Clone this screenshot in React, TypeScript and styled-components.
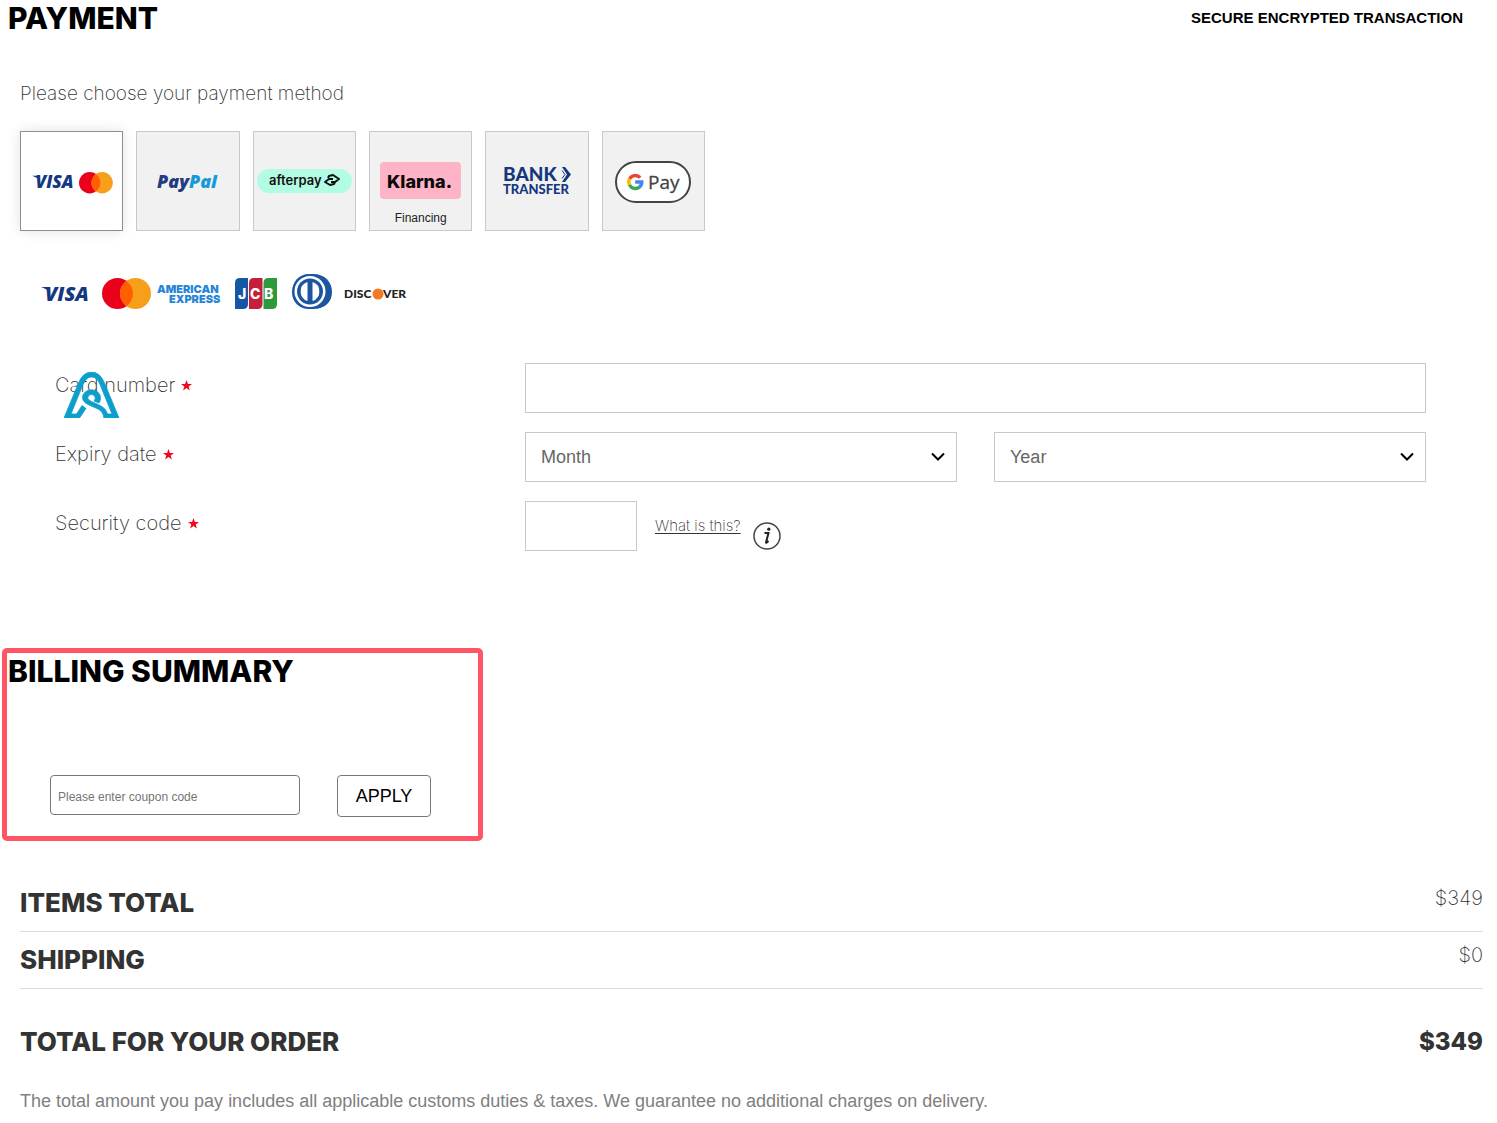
import React, { useState } from "react";
import styled, { createGlobalStyle } from "styled-components";

const display = `Inter, "Open Sans", sans-serif`;
const body = `"Liberation Sans", Arial, sans-serif`;

const GlobalStyle = createGlobalStyle`
  *, *::before, *::after { box-sizing: border-box; }
  body { margin: 0; background: #fff; color: #333; font-family: ${body}; }
`;

const Page = styled.main`
  padding-bottom: 10px;
`;

const Header = styled.header`
  display: flex;
  justify-content: space-between;
  align-items: center;
  padding: 0 34px 0 8px;
`;

const SectionTitle = styled.h2`
  margin: 0;
  font: 800 30px/36px ${display};
  color: #000;
`;

const SecureNote = styled.strong`
  font: 700 15px/36px ${body};
  color: #000;
`;

const Methods = styled.section`
  padding: 46px 20px 0;
`;

const Prompt = styled.p`
  margin: 0 0 25px;
  font: 200 19px/24px ${display};
  color: #333;
`;

const TileGrid = styled.div`
  display: grid;
  grid-template-columns: repeat(6, 1fr);
  gap: 13px;
  max-width: 685px;
`;

const Tile = styled.button<{ $selected: boolean }>`
  display: flex;
  flex-direction: column;
  align-items: center;
  justify-content: flex-end;
  height: 100px;
  padding: 0;
  overflow: hidden;
  cursor: pointer;
  font: 400 12px/16px ${body};
  color: #222;
  background: ${(p) => (p.$selected ? "#fff" : "#f1f1f1")};
  border: 1px solid ${(p) => (p.$selected ? "#8f8f8f" : "#c9c9c9")};
  box-shadow: ${(p) => (p.$selected ? "0 0 12px rgba(0, 0, 0, 0.12)" : "none")};
`;

const TileArt = styled.svg`
  display: block;
  flex: none;
`;

const TileCaption = styled.span`
  height: 20px;
`;

const CardBrands = styled.div`
  display: flex;
  gap: 5px;
  padding: 43px 21px 0;
`;

const CardForm = styled.form`
  display: grid;
  grid-template-columns: 470px 1fr;
  row-gap: 19px;
  padding: 53px 71px 0 55px;
`;

const LabelCell = styled.div`
  position: relative;
  padding-top: 10px;
`;

const FieldLabel = styled.label`
  display: flex;
  align-items: center;
  gap: 6px;
  font: 200 20px/24px ${display};
  color: #333;
`;

const Watermark = styled.svg`
  position: absolute;
  left: 9px;
  top: 9px;
`;

const FieldRow = styled.div`
  display: flex;
  gap: 37px;
`;

const TextBox = styled.input<{ $short?: boolean }>`
  flex: ${(p) => (p.$short ? "0 0 112px" : "1")};
  width: 112px;
  height: 50px;
  padding: 0 15px;
  font: 400 18px/24px ${body};
  color: #333;
  background: #fff;
  border: 1px solid #c9c9c9;
  border-radius: 0;
`;

const SelectWrap = styled.div`
  position: relative;
  flex: 1;
`;

const Select = styled.select`
  appearance: none;
  display: block;
  width: 100%;
  height: 50px;
  padding: 0 40px 0 15px;
  font: 400 18px/24px ${body};
  color: #666;
  background: #fff;
  border: 1px solid #c9c9c9;
  border-radius: 0;
`;

const Chevron = styled.svg`
  position: absolute;
  right: 12px;
  top: 20px;
  pointer-events: none;
`;

const HelpGroup = styled.div`
  display: flex;
  align-items: flex-start;
  gap: 12px;
  padding-top: 16px;
  margin-left: -19px;
`;

const HelpLink = styled.a`
  font: 200 15px/18px ${display};
  color: #333;
  text-decoration: underline;
  text-underline-offset: 2px;
`;

const InfoIcon = styled.svg`
  margin-top: 5px;
`;

const Billing = styled.section`
  width: 481px;
  max-width: 100%;
  margin: 97px 0 0 2px;
  padding: 0 0 19px 1px;
  border: 5px solid #ff5565;
  border-radius: 5px;
`;

const CouponForm = styled.form`
  display: flex;
  align-items: flex-start;
  gap: 37px;
  padding: 86px 0 0 42px;
`;

const CouponInput = styled.input`
  width: 250px;
  height: 40px;
  padding: 3px 7px 0;
  font: 400 12px/16px ${body};
  color: #333;
  background: #fff;
  border: 1px solid #777;
  border-radius: 4px;
  &::placeholder { color: #757575; }
`;

const ApplyButton = styled.button`
  width: 94px;
  height: 42px;
  padding: 0;
  font: 400 18px/24px ${body};
  color: #000;
  background: #fff;
  border: 1px solid #777;
  border-radius: 4px;
  cursor: pointer;
`;

const Totals = styled.dl`
  margin: 34px 0 0;
  padding: 0 14px 0 20px;
`;

const TotalRow = styled.div`
  display: flex;
  justify-content: space-between;
  padding: 9px 0 14px;
  border-bottom: 1px solid #dcdcdc;
`;

const TotalName = styled.dt`
  padding-top: 5px;
  font: 800 26px/28px ${display};
`;

const Amount = styled.dd`
  margin: 0;
  font: 200 20px/28px ${display};
  color: #333;
`;

const GrandRow = styled.div`
  display: flex;
  justify-content: space-between;
  align-items: flex-end;
  padding-top: 34px;
`;

const GrandAmount = styled.dd`
  margin: 0;
  font: 800 24px/28px ${display};
`;

const DutyNote = styled.p`
  margin: 33px 20px 0;
  font: 400 18px/24px ${body};
  color: #808080;
`;

const VisaMark = () => (
  <g fill="#14387f">
    <text x="4" y="15" fontFamily="Open Sans" fontWeight="800" fontStyle="italic" fontSize="20">VISA</text>
    <path d="M0 1h6l2 4C5 3 3 2 0 1z" />
  </g>
);

const MasterMark = () => (
  <g>
    <circle cx="15.5" cy="15.5" r="15.5" fill="#eb001b" />
    <circle cx="33.5" cy="15.5" r="15.5" fill="#f79e1b" />
    <path d="M24.5 2.9a15.5 15.5 0 0 1 0 25.2a15.5 15.5 0 0 1 0-25.2z" fill="#ff5f00" />
  </g>
);

const Star = () => (
  <svg width="11" height="11" viewBox="0 0 11 11" aria-hidden="true">
    <path d="M5.5 0l1.4 3.9H11L7.7 6.4 8.9 10.6 5.5 8.1 2.1 10.6 3.3 6.4 0 3.9h4.1z" fill="#f4061c" />
  </svg>
);

const art: Record<string, React.ReactNode> = {
  card: (
    <>
      <g transform="translate(11 43) scale(0.87)"><VisaMark /></g>
      <g transform="translate(58 40) scale(0.69)"><MasterMark /></g>
    </>
  ),
  paypal: (
    <text x="20" y="56" fontFamily="Open Sans" fontWeight="800" fontStyle="italic" fontSize="18" fill="#253b80">
      Pay<tspan fill="#179bd7">Pal</tspan>
    </text>
  ),
  afterpay: (
    <>
      <rect x="4" y="37" width="95" height="24" rx="12" fill="#b2fce4" />
      <text x="16" y="53" fontFamily="Inter" fontWeight="600" fontSize="13" fill="#111">afterpay</text>
      <g fill="none" stroke="#111" strokeWidth="2" strokeLinejoin="round">
        <path d="M75 46l1-2 4-1 6 4-4 3h-4" />
        <path d="M80 47h-4l-4 3 5 3 4-1 1-2" />
      </g>
    </>
  ),
  klarna: (
    <>
      <rect x="10" y="30" width="81" height="37" rx="4" fill="#ffb3c7" />
      <text x="17" y="56" fontFamily="Inter" fontWeight="800" fontSize="18" fill="#0b0b0b">Klarna.</text>
    </>
  ),
  bank: (
    <g fill="#14387f">
      <text fontFamily="Lato" fontWeight="900">
        <tspan x="17" y="49" fontSize="19">BANK</tspan>
        <tspan x="17" y="62" fontSize="13">TRANSFER</tspan>
      </text>
      <path d="M76 35h3l6 7.500l-6 7.500h-3l5-7.500z" />
      <path d="M76 38.500l3 4l-3 4" fill="none" stroke="#14387f" />
    </g>
  ),
  gpay: (
    <>
      <rect x="14" y="30" width="74" height="40" rx="20" fill="#fff" stroke="#444" strokeWidth="2" />
      <g fill="none" strokeWidth="3.400">
        <path d="M38.200 45.600A6.700 6.700 0 0 0 27.500 47" stroke="#ea4335" />
        <path d="M27.700 46.600a6.700 6.700 0 0 0 0 6.800" stroke="#fbbc04" />
        <path d="M27.500 53a6.700 6.700 0 0 0 10 2.100" stroke="#34a853" />
        <path d="M37.300 55.200a6.700 6.700 0 0 0 2.500-5.200h-6.600" stroke="#4285f4" />
      </g>
      <text x="46" y="57" fontFamily="Open Sans" fontSize="19" fill="#444" stroke="#444" strokeWidth="0.300">Pay</text>
    </>
  ),
};

const methods = [
  { id: "card", name: "Visa and Mastercard" },
  { id: "paypal", name: "PayPal" },
  { id: "afterpay", name: "Afterpay" },
  { id: "klarna", name: "Klarna", caption: "Financing" },
  { id: "bank", name: "Bank transfer" },
  { id: "gpay", name: "Google Pay" },
];

function BrandRow() {
  return (
    <CardBrands>
      <svg width="56" height="36" viewBox="0 0 56 36" role="img" aria-label="Visa">
        <g transform="translate(0 12)"><VisaMark /></g>
      </svg>
      <svg width="50" height="36" viewBox="0 0 50 36" role="img" aria-label="Mastercard">
        <g transform="translate(0 4)"><MasterMark /></g>
      </svg>
      <svg width="68" height="36" viewBox="0 0 68 36" role="img" aria-label="American Express">
        <text fill="#2586d8" fontFamily="Inter" fontWeight="900" fontSize="11">
          <tspan x="0" y="19">AMERICAN</tspan>
          <tspan x="12" y="29">EXPRESS</tspan>
        </text>
      </svg>
      <svg width="53" height="36" viewBox="0 0 53 36" role="img" aria-label="JCB">
        <path d="M10 4h8v26q0 5-5 5H5V9q0-5 5-5z" fill="#1557a5" />
        <path d="M24 4h8.500v26q0 5-5 5H19V9q0-5 5-5z" fill="#c61f3c" />
        <path d="M38.500 4H47v26q0 5-5 5h-8.500V9q0-5 5-5z" fill="#2c9a3c" />
        <text y="25" fontFamily="Inter" fontWeight="800" fontSize="14" fill="#fff">
          <tspan x="8">J</tspan>
          <tspan x="20">C</tspan>
          <tspan x="34">B</tspan>
        </text>
      </svg>
      <svg width="48" height="36" viewBox="0 0 48 36" role="img" aria-label="Diners Club">
        <path d="M21 0h4C37 0 44 8 44 18S37 35 25 35h-4C11 35 4 28 4 18S11 0 21 0z" fill="#1c55a0" />
        <circle cx="22" cy="17.500" r="15.500" fill="#fff" />
        <circle cx="22" cy="17.500" r="13" fill="#1c55a0" />
        <path d="M19.500 8v19a10 10 0 0 1 0-19zM24.500 8v19a10 10 0 0 0 0-19z" fill="#fff" />
      </svg>
      <svg width="68" height="36" viewBox="0 0 68 36" role="img" aria-label="Discover">
        <text y="24" fill="#222" fontFamily="Lato" fontWeight="900" fontSize="12">
          <tspan x="3">DISC</tspan>
          <tspan x="42">VER</tspan>
        </text>
        <circle cx="37" cy="20" r="5.500" fill="#f27a20" />
      </svg>
    </CardBrands>
  );
}

function Dropdown({ id, label, options }: { id: string; label: string; options: string[] }) {
  return (
    <SelectWrap>
      <Select id={id} aria-label={label} defaultValue="">
        <option value="">{label}</option>
        {options.map((o) => <option key={o}>{o}</option>)}
      </Select>
      <Chevron width="14" height="10" viewBox="0 0 14 10" aria-hidden="true">
        <path d="M1 1.500l6 6 6-6" fill="none" stroke="#000" strokeWidth="2" />
      </Chevron>
    </SelectWrap>
  );
}

export default function App() {
  const [method, setMethod] = useState("card");
  const months = Array.from({ length: 12 }, (_, i) => String(i + 1).padStart(2, "0"));
  const years = Array.from({ length: 10 }, (_, i) => String(2024 + i));

  return (
    <Page>
      <GlobalStyle />
      <Header>
        <SectionTitle>PAYMENT</SectionTitle>
        <SecureNote>SECURE ENCRYPTED TRANSACTION</SecureNote>
      </Header>

      <Methods>
        <Prompt>Please choose your payment method</Prompt>
        <TileGrid>
          {methods.map((m) => (
            <Tile
              key={m.id}
              type="button"
              aria-label={m.name}
              aria-pressed={method === m.id}
              $selected={method === m.id}
              onClick={() => setMethod(m.id)}
            >
              <TileArt width="102" height={m.caption ? 78 : 98} viewBox={m.caption ? "0 0 102 78" : "0 0 102 98"}>
                {art[m.id]}
              </TileArt>
              {m.caption && <TileCaption>{m.caption}</TileCaption>}
            </Tile>
          ))}
        </TileGrid>
        <BrandRow />
      </Methods>

      <CardForm onSubmit={(e) => e.preventDefault()}>
        <LabelCell>
          <FieldLabel htmlFor="number">Card number <Star /></FieldLabel>
          <Watermark width="55" height="46" viewBox="0 0 55 46" aria-hidden="true">
            <path
              d="M0 46L14.500 11Q19 0 27.500 0T40.500 11L55 46H40Q39 39 33 36.500L25 33Q18.500 30 18.500 25.500A9 8 0 0 1 36.500 26Q36.500 29 35 31L30 29Q31.500 27 31.200 25.500A3.800 3.800 0 0 0 23.700 26Q24 28 27.500 29.500L35 33Q42 36 43.500 42H48L36 12.500Q33 5 27.500 5T19 12.500L7 42H12.500L18 33.500L22 36.500L15.500 46Z"
              fill="#0d9fcb"
              stroke="#0d9fcb"
              strokeWidth="0.800"
            />
          </Watermark>
        </LabelCell>
        <FieldRow><TextBox id="number" type="text" /></FieldRow>

        <LabelCell><FieldLabel htmlFor="month">Expiry date <Star /></FieldLabel></LabelCell>
        <FieldRow>
          <Dropdown id="month" label="Month" options={months} />
          <Dropdown id="year" label="Year" options={years} />
        </FieldRow>

        <LabelCell><FieldLabel htmlFor="code">Security code <Star /></FieldLabel></LabelCell>
        <FieldRow>
          <TextBox id="code" type="text" $short />
          <HelpGroup>
            <HelpLink href="#code">What is this?</HelpLink>
            <InfoIcon width="28" height="28" viewBox="0 0 28 28" aria-hidden="true">
              <circle cx="14" cy="14" r="13" fill="#fff" stroke="#444" strokeWidth="1.500" />
              <path d="M11.500 11h4l-2.500 9.500q0 1 2.500-1.500" fill="none" stroke="#222" strokeWidth="2" />
              <circle cx="15.800" cy="7.200" r="1.600" fill="#222" />
            </InfoIcon>
          </HelpGroup>
        </FieldRow>
      </CardForm>

      <Billing>
        <SectionTitle>BILLING SUMMARY</SectionTitle>
        <CouponForm onSubmit={(e) => e.preventDefault()}>
          <CouponInput type="text" aria-label="Coupon code" placeholder="Please enter coupon code" />
          <ApplyButton type="submit">APPLY</ApplyButton>
        </CouponForm>
      </Billing>

      <Totals>
        <TotalRow><TotalName>ITEMS TOTAL</TotalName><Amount>$349</Amount></TotalRow>
        <TotalRow><TotalName>SHIPPING</TotalName><Amount>$0</Amount></TotalRow>
        <GrandRow><TotalName>TOTAL FOR YOUR ORDER</TotalName><GrandAmount>$349</GrandAmount></GrandRow>
      </Totals>
      <DutyNote>
        The total amount you pay includes all applicable customs duties &amp; taxes. We guarantee no additional charges on delivery.
      </DutyNote>
    </Page>
  );
}
